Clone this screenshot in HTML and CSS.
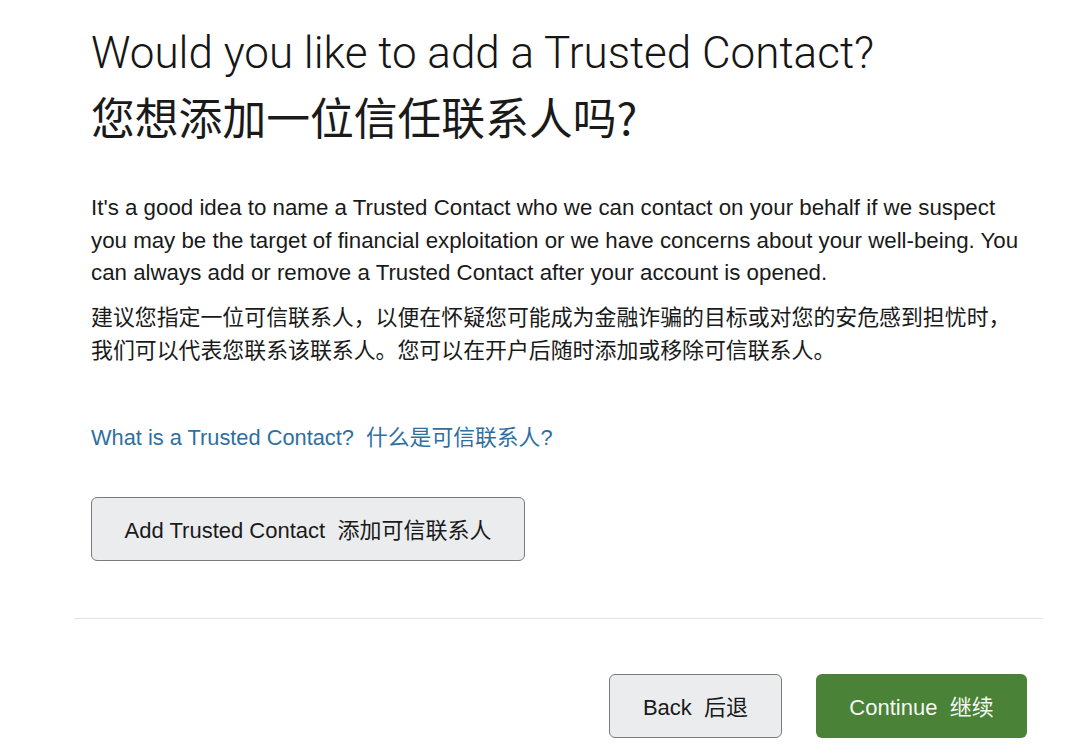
FILE: index.html
```html
<!DOCTYPE html>
<html>
	<head>
		<title>Trusted Contact</title><meta charset="utf-8">
		<link rel="stylesheet" href="styles.css">
	</head>
	<body>
		<div id="page">
			<div class="content">
				<h1 class="title">
					<span class="title-en">Would you like to add a Trusted Contact?</span>
					<span class="title-zh">您想添加一位信任联系人吗?</span>
				</h1>
				<p class="lead">It's a good idea to name a Trusted Contact who we can contact on your behalf if we suspect you may be the target of financial exploitation or we have concerns about your well-being. You can always add or remove a Trusted Contact after your account is opened.</p>
				<p class="lead-zh">建议您指定一位可信联系人，以便在怀疑您可能成为金融诈骗的目标或对您的安危感到担忧时，我们可以代表您联系该联系人。您可以在开户后随时添加或移除可信联系人。</p>
				<a class="help" href="#">What is a Trusted Contact?&nbsp; 什么是可信联系人?</a>
				<div>
					<button class="btn btn-add">Add Trusted Contact&nbsp; 添加可信联系人</button>
				</div>
			</div>
			<div class="actions">
				<button class="btn btn-back">Back&nbsp; 后退</button>
				<button class="btn btn-go">Continue&nbsp; 继续</button>
			</div>
		</div>
	</body>
</html>
```

FILE: styles.css
```css
body {
	margin: 0;
	background: white;
	font-family: "Liberation Sans", Arial, "Noto Sans CJK SC", sans-serif;
	color: #1a1a1a;
}
#page { width: 969px; margin-left: 74px; }
.content { padding: 0 17px; }

.title { margin: 28px 0 0; font-weight: normal; }
.title-en {
	display: block;
	font-family: Roboto, "Liberation Sans", sans-serif;
	font-weight: 300;
	font-size: 44px;
	line-height: 50px;
	color: #161616;
}
.title-zh {
	display: block;
	margin-top: 9px;
	font-family: "Noto Sans CJK SC", sans-serif;
	font-weight: 400;
	font-size: 43.8px;
	line-height: 58px;
}

.lead { margin: 47px 0 0; font-size: 22.3px; line-height: 32.5px; width: 935px; }
.lead-zh {
	margin: 9px 0 0;
	width: 925px;
	font-family: "Noto Sans CJK SC", sans-serif;
	font-size: 21.9px;
	line-height: 33px;
}

.help {
	display: inline-block;
	margin-top: 55px;
	color: #2f6f9f;
	font-size: 21.8px;
	text-decoration: none;
}

.btn {
	font-family: "Liberation Sans", "Noto Sans CJK SC", sans-serif;
	font-size: 22px;
	border-radius: 6px;
	height: 64px;
	padding-bottom: 3px;
	cursor: pointer;
}
.btn-add {
	margin-top: 46px;
	width: 434px;
	background: #ebecee;
	border: 1.5px solid #7b7b7b;
	color: #1a1a1a;
}

.actions {
	margin-top: 57px;
	border-top: 1px solid #e3e3e3;
	padding: 55px 16px 0 0;
	display: flex;
	justify-content: flex-end;
	gap: 34px;
}
.btn-back {
	width: 173px;
	background: #ebecee;
	border: 1.5px solid #7b7b7b;
	color: #1a1a1a;
}
.btn-go {
	width: 211px;
	background: #4a8238;
	border: none;
	color: #f4f8f2;
}
```
